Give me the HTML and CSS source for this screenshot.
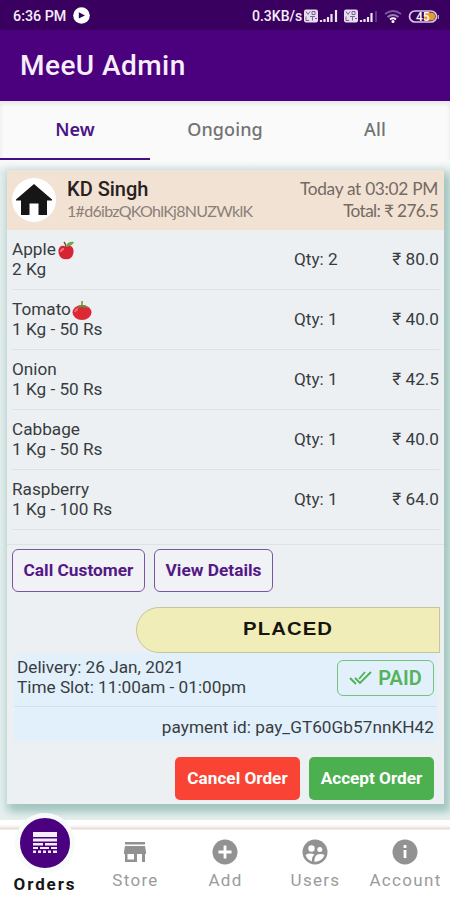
FILE: index.html
```html
<!DOCTYPE html>
<html lang="en">
<head>
<meta charset="utf-8">
<title>MeeU Admin</title>
<link rel="stylesheet" href="styles.css">
</head>
<body>
<div class="status">
  <span class="clock">6:36 PM</span>
  <svg class="play" width="17" height="17" viewBox="0 0 17 17"><circle cx="8.5" cy="8.5" r="8.3" fill="#fff"/><path d="M5.8 5.2 12 8.5 5.8 11.5Z" fill="#38005d"/></svg>
  <span class="speed">0.3KB/s</span>
  <svg class="signals" width="136" height="18" viewBox="0 0 136 18">
    <g id="volte"><rect x="1" y="2.500" width="14" height="13" rx="2" fill="#e8dcf0"/><path d="M3 4.500l2 3 2-3M9 4.500h3v3H9zM3 9.500v4h3M7 9.500h5M9.500 9.500v4M12 11.500h2" stroke="#7c6292" fill="none"/></g>
    <use href="#volte" x="40"/>
    <path d="M18 15v-2M21.500 15v-3M25 15v-5M28.500 15V7M33 15V3M58 15v-2M61.500 15v-3M65 15v-5M68.500 15V6" stroke="#efe4f5" stroke-width="2.200"/><path d="M73 15V4" stroke="#71498c" stroke-width="1.500"/>
    <g fill="none" stroke-width="1.800"><path d="M82 7q8-6 16 0" stroke="#7e57a0"/><path d="M84.500 10q5.500-4 11 0" stroke="#9c7db5"/><path d="M87 12.500q3-2.500 6 0" stroke="#fff"/></g><circle cx="90" cy="14.500" r="1.500" fill="#fff"/>
    <rect x="106.500" y="4" width="27" height="11" rx="5.500" fill="#3a005d" stroke="#dac9e4" stroke-width="1.700"/><path d="M121 5.500h7a4 4 0 0 1 0 8h-7z" fill="#e79b31"/><path d="M135.300 8v4" stroke="#dac9e4"/><text x="113" y="13.800" class="battery">45</text>
  </svg>
</div>
<header class="appbar"><h1>MeeU Admin</h1></header>
<nav class="tabs"><span class="on">New</span><span>Ongoing</span><span>All</span></nav>
<main class="page">
  <article class="card">
    <header class="customer">
      <div class="home"><svg width="36" height="32" viewBox="0 0 36 32"><path d="M18 0 36 15.500V16.500H31V31H22.500V19.500H13.500V31H5V16.500H0V15.500Z" fill="#171616"/></svg></div>
      <div class="who"><strong>KD Singh</strong><small>1#d6ibzQKOhlKj8NUZWklK</small></div>
      <div class="sum"><span class="when">Today at 03:02 PM</span><span class="total">Total: ₹ 276.5</span></div>
    </header>
    <section class="items">
      <div class="item"><div>Apple<svg class="fruit" width="19" height="20" viewBox="0 0 19 20"><path d="M9 6C5 3 1 6 1.500 11c.5 5 4 8 7.500 7 4 1 7-2 7.500-7 .5-5-3.500-8-7.500-5Z" fill="#d92335"/><path d="M9 7Q9 3 7 1" stroke="#77422c" stroke-width="1.400" fill="none"/><path d="M9 5Q11 0 17 1q-2 5-8 4" fill="#72a943"/><path d="M4 11q0-3 3-3" stroke="#f17777" stroke-width="2" fill="none"/></svg><br>2 Kg</div><span>Qty: 2</span><span>₹ 80.0</span></div>
      <div class="item"><div>Tomato<svg class="fruit" width="20" height="20" viewBox="0 0 20 20"><ellipse cx="10" cy="11.500" rx="9.500" ry="7.500" fill="#dc2935"/><path d="M10 6 5 7l3-3 1.300 0V0h1.500v4l4 1 1 2Z" fill="#64933d"/><path d="M3 11q1-3 3-3" stroke="#f26b6a" stroke-width="2" fill="none"/></svg><br>1 Kg - 50 Rs</div><span>Qty: 1</span><span>₹ 40.0</span></div>
      <div class="item"><div>Onion<br>1 Kg - 50 Rs</div><span>Qty: 1</span><span>₹ 42.5</span></div>
      <div class="item"><div>Cabbage<br>1 Kg - 50 Rs</div><span>Qty: 1</span><span>₹ 40.0</span></div>
      <div class="item"><div>Raspberry<br>1 Kg - 100 Rs</div><span>Qty: 1</span><span>₹ 64.0</span></div>
    </section>
    <div class="links"><button class="call">Call Customer</button><button class="view">View Details</button></div>
    <div class="placed"><span>PLACED</span></div>
    <section class="delivery">
      <div class="slot"><div>Delivery: 26 Jan, 2021<br>Time Slot: 11:00am - 01:00pm</div><div class="paid"><svg width="24" height="16" viewBox="0 0 24 16"><path d="m1 8 6 6M6 8l5 5L22 2M10 9l6-7" fill="none" stroke="#4caf50" stroke-width="1.800"/></svg>PAID</div></div>
      <div class="payment">payment id: pay_GT60Gb57nnKH42</div>
    </section>
    <div class="actions"><button class="cancel">Cancel Order</button><button class="accept">Accept Order</button></div>
  </article>
</main>
<nav class="bottom">
  <a class="active"><div class="bubble"><svg width="24" height="22" viewBox="0 0 24 22"><path d="M0 0h24v5H0zM0 6.500h24v3H0zM0 11h10v2.500H0zM12 11h12v2.500H12zM0 15h5v2H0zM7 15h9v2H7zM18 15h6v2h-6zM0 18.500h3V21H0zM5 18.500h3V21H5zM10 18.500h3V21h-3zM15 18.500h3V21h-3zM20 18.500h4V21h-4z" fill="#f6edfc"/></svg></div><span>Orders</span></a>
  <a><svg width="26" height="26" viewBox="0 0 26 26"><path d="M3 3h20v2.500H3zM3 7h20l1 6v2h-1v8h-3v-8h-5v8H3v-8H2v-2zM5.500 15v5.500H12V15z" fill="#929292" fill-rule="evenodd"/></svg><span>Store</span></a>
  <a><svg width="26" height="26" viewBox="0 0 26 26"><circle cx="13" cy="13" r="12.500" fill="#929292"/><path d="M13 6.500v13M6.500 13h13" stroke="#fff" stroke-width="2.800"/></svg><span>Add</span></a>
  <a><svg width="26" height="26" viewBox="0 0 26 26"><circle cx="13" cy="13" r="12.500" fill="#929292"/><circle cx="9.500" cy="9.500" r="3.200" fill="#fff"/><circle cx="17.800" cy="10.500" r="2.500" fill="#fff"/><path d="M3.500 16q4-2.500 9-.500-3 2-2.500 7-5-2-6.500-6.500M12.500 23q-.5-8 5.500-8 3 0 4.500 1-2 6-10 7" fill="#fff"/></svg><span>Users</span></a>
  <a><svg width="26" height="26" viewBox="0 0 26 26"><circle cx="13" cy="13" r="12.500" fill="#929292"/><path d="M13 6v3M13 11v8" stroke="#fff" stroke-width="2.800"/></svg><span>Account</span></a>
</nav>
</body>
</html>
```
FILE: styles.css
```css
* { box-sizing: border-box; }
body { margin: 0; width: 450px; height: 900px; overflow: hidden; display: flex; flex-direction: column; background: #fff; font: 17.2px/20px Roboto, sans-serif; color: #383c40; }
button { font: inherit; padding: 0; white-space: nowrap; }
.status { height: 30px; flex: none; background: #390060; color: #f6edfa; display: flex; align-items: center; padding: 2px 0 0 13px; }
.clock { font-size: 14.3px; font-weight: 500; width: 60px; white-space: nowrap; }
.play { margin-top: -2px; }
.speed { margin-left: 162px; width: 51px; font-size: 14px; font-weight: 500; white-space: nowrap; }
.signals { flex: none; }
.battery { font: 500 12px Roboto, sans-serif; fill: #fff; }
.appbar { height: 71px; flex: none; background: #4b007e; padding: 20px 20px; }
h1 { margin: 0; color: #f6effb; font-size: 28px; line-height: 31px; font-weight: 500; letter-spacing: .45px; }
.tabs { height: 59px; flex: none; display: grid; grid-template-columns: repeat(3, 1fr); text-align: center; background: #fafafa; box-shadow: inset 0 3px 4px #e6e6e8; font: 500 18px/56px "Noto Sans", sans-serif; color: #737373; letter-spacing: .1px; }
.tabs .on { color: #4b1486; font-weight: 600; border-bottom: 2px solid #431183; }
.page { height: 660px; flex: none; padding: 10px 6px 16px 7px; background: linear-gradient(#fafafa, #e5efee 12px); overflow: hidden; }
.card { height: 634px; background: #ecf0f3; box-shadow: 4px 6px 8px 2px #a3c6c0, 0 2px 6px 3px #d3e3e1; display: flex; flex-direction: column; }
.customer { height: 60px; flex: none; background: #f2e2d4; display: flex; padding: 8px 6px 0 5px; }
.home { width: 44px; height: 44px; border-radius: 50%; background: #fff; display: flex; align-items: center; justify-content: center; }
.who { margin-left: 11px; flex: 1; display: flex; flex-direction: column; }
.who strong { font-size: 20px; line-height: 22px; font-weight: 500; color: #29211e; }
.who small { font: 16px/22px Lato, sans-serif; color: #8b8078; white-space: nowrap; letter-spacing: -.7px; }
.sum { font: 17.3px/23px Lato, sans-serif; color: #746a63; display: flex; flex-direction: column; align-items: flex-end; white-space: nowrap; letter-spacing: -.3px; }
.sum .when { line-height: 21px; }
.sum .total { letter-spacing: -.65px; }
.items { height: 315px; flex: none; border-bottom: 1px solid #dde2e5; padding: 0 5px; }
.item { height: 60px; display: grid; grid-template-columns: 282px 75px 1fr; align-items: center; padding-bottom: 2px; border-bottom: 1px solid #dde2e5; }
.item > span:last-child { text-align: right; }
.fruit { vertical-align: -3px; height: 20px; margin: -3px 0 -3px 1px; }
.links { display: flex; gap: 9px; padding: 4px 5px 0; height: 46px; flex: none; }
.links button { height: 43px; flex: none; padding-bottom: 1px; border: 1.5px solid #7c55a2; border-radius: 6px; background: #f0f2f6; color: #541887; font-weight: 700; font-size: 17.3px; }
.links .call { width: 133px; }
.links .view { width: 119px; }
.placed { margin: 16px 4px 0 129px; height: 46px; flex: none; border: 1px solid #c5c49c; border-radius: 23px 0 0 23px; background: #f0edb9; text-align: center; font: 700 19px/42px "Liberation Sans", sans-serif; letter-spacing: 1px; color: #171510; }
.placed span { display: inline-block; transform: scaleX(1.07); }
.delivery { margin: 0 7px; height: 88px; flex: none; background: #e2f0fc; }
.slot { height: 54px; border-bottom: 1px solid #d2e1ed; display: flex; justify-content: space-between; padding: 4px 3px; white-space: nowrap; }
.paid { width: 97px; height: 36px; margin: 3px 0 0; flex: none; border: 1.5px solid #77c37d; border-radius: 6px; color: #55b35b; font-size: 20px; font-weight: 600; display: flex; align-items: center; justify-content: center; gap: 5px; padding-bottom: 1px; }
.payment { text-align: right; padding: 10px 3px; white-space: nowrap; letter-spacing: .04px; }
.actions { display: flex; justify-content: flex-end; gap: 9px; padding: 16px 10px 0 0; }
.actions button { height: 43px; border: 0; border-radius: 5px; padding-bottom: 1px; color: #fff; font-weight: 700; font-size: 17.2px; }
.cancel { width: 125px; background: #f94335; }
.accept { width: 125px; background: #4caf50; }
.bottom { height: 80px; flex: none; background: linear-gradient(#fff 5px, #f4edf1 7px, #e9d8ca 9px, #fff 10px); display: grid; grid-template-columns: repeat(5, 90px); color: #9b9b9b; letter-spacing: 1.3px; font-size: 17px; }
.bottom a { display: flex; flex-direction: column; align-items: center; padding-top: 19px; }
.bottom a > span { margin: 5px -1px 0 0; }
.bottom svg { display: block; }
.bottom .active { padding: 0; color: #161616; font-weight: 700; letter-spacing: 1.9px; }
.bubble { width: 60px; height: 60px; margin-top: -7px; border-radius: 50%; border: 5px solid #f6faf9; background: #4b007f; display: flex; align-items: center; justify-content: center; z-index: 1; }
.bottom .active > span { margin: 1px 0 0; }
```
